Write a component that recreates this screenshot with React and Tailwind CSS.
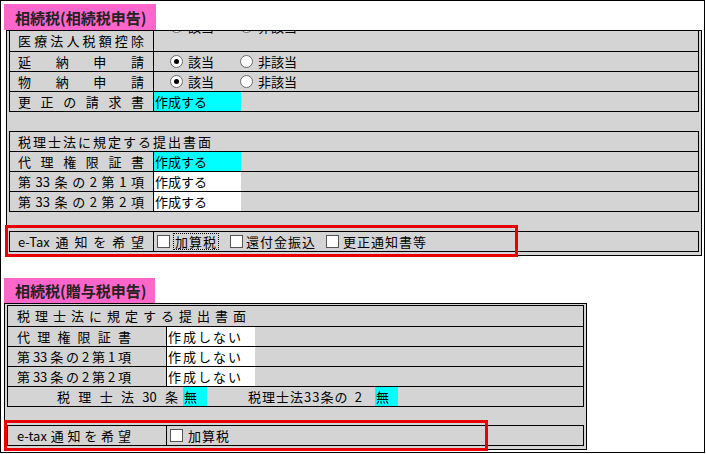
import React from "react";

function J({ t, cls }) {
  return (
    <div className={cls}>
      {t.map((c, i) => (
        <span key={i}>{c}</span>
      ))}
    </div>
  );
}

function Radio({ checked }) {
  return (
    <span className="w-[13px] h-[13px] rounded-full border border-[#6b6b6b] bg-white flex items-center justify-center shrink-0">
      {checked ? <span className="w-[5px] h-[5px] rounded-full bg-black" /> : null}
    </span>
  );
}

function RadioPair({ shift }) {
  return (
    <div className={shift ? "flex items-center h-[19px] pl-[16px] -mt-[14px]" : "flex items-center h-[19px] pl-[16px]"}>
      <Radio checked />
      <span className="ml-[5px]">該当</span>
      <span className="ml-[26px] flex">
        <Radio />
      </span>
      <span className="ml-[5px]">非該当</span>
    </div>
  );
}

function Box() {
  return <span className="w-[13px] h-[13px] border border-[#555] bg-white shrink-0" />;
}

const topLabel = "w-[144px] shrink-0 border-r border-black pl-[8px] pr-[9px] flex justify-between";
const botLabel = "w-[159px] shrink-0 border-r border-black pl-[9px] pr-[35px] flex justify-between";

export default function App() {
  return (
    <div className="w-[706px] h-[454px] bg-white">
      <div className="w-[705px] h-[453px] border border-black bg-white overflow-hidden font-['Noto_Sans_CJK_JP','Noto_Sans',sans-serif] text-[13px] leading-[19px] text-black">
        {/* ===== 相続税申告 ===== */}
        <div className="ml-[3px] mt-[3px] w-[152px] h-[26px] bg-[#ff66cc] pl-[11px] flex items-end pb-[2px] text-[15px] leading-[20px] font-bold text-[#222]">
          相続税(相続税申告)
        </div>
        <div className="ml-[5px] w-[696px] h-[226px] border border-black bg-[#d4d4d4] pl-[2px]">
          <div className="w-[690px] border-l border-r border-black">
            <div className="flex h-[21px] border-b border-black">
              <J cls={topLabel} t={["医", "療", "法", "人", "税", "額", "控", "除"]} />
              <div className="flex-1 overflow-hidden">
                <RadioPair shift />
              </div>
            </div>
            <div className="flex h-[20px] border-b border-black">
              <J cls={topLabel} t={["延", "納", "申", "請"]} />
              <div className="flex-1">
                <RadioPair />
              </div>
            </div>
            <div className="flex h-[20px] border-b border-black">
              <J cls={topLabel} t={["物", "納", "申", "請"]} />
              <div className="flex-1">
                <RadioPair />
              </div>
            </div>
            <div className="flex h-[20px] border-b border-black">
              <J cls={topLabel} t={["更", "正", "の", "請", "求", "書"]} />
              <div className="w-[87px] bg-[#00ffff] pl-[1px]">作成する</div>
            </div>
          </div>

          <div className="mt-[19px] w-[690px] border-t border-l border-r border-black">
            <div className="h-[20px] border-b border-black pl-[8px] tracking-[2px]">税理士法に規定する提出書面</div>
            <div className="flex h-[20px] border-b border-black">
              <J cls={topLabel} t={["代", "理", "権", "限", "証", "書"]} />
              <div className="w-[87px] bg-[#00ffff] pl-[1px]">作成する</div>
            </div>
            <div className="flex h-[20px] border-b border-black">
              <J cls={topLabel} t={["第", "33", "条", "の", "2", "第", "1", "項"]} />
              <div className="w-[87px] bg-white pl-[1px]">作成する</div>
            </div>
            <div className="flex h-[20px] border-b border-black">
              <J cls={topLabel} t={["第", "33", "条", "の", "2", "第", "2", "項"]} />
              <div className="w-[87px] bg-white pl-[1px]">作成する</div>
            </div>
          </div>

          <div className="relative mt-[19px] w-[690px] h-[21px] border border-black flex">
            <J cls={topLabel} t={["e-Tax", "通", "知", "を", "希", "望"]} />
            <div className="flex items-center tracking-[1px]">
              <span className="ml-[3px] flex">
                <Box />
              </span>
              <span className="ml-[3px] border border-dotted border-black px-[1px] leading-[15px]">加算税</span>
              <span className="ml-[11px] flex">
                <Box />
              </span>
              <span className="ml-[3px]">還付金振込</span>
              <span className="ml-[10px] flex">
                <Box />
              </span>
              <span className="ml-[4px]">更正通知書等</span>
            </div>
            <div className="absolute left-[-5px] top-[-7px] w-[513px] h-[32px] border-[3px] border-[#e80000] pointer-events-none" />
          </div>
        </div>

        {/* ===== 贈与税申告 ===== */}
        <div className="ml-[3px] mt-[22px] w-[151px] h-[25px] bg-[#ff66cc] pl-[11px] flex items-end pb-[2px] text-[15px] leading-[20px] font-bold text-[#222]">
          相続税(贈与税申告)
        </div>
        <div className="ml-[3px] w-[583px] h-[147px] border border-black bg-[#d4d4d4] pl-[2px] pt-[1px]">
          <div className="w-[577px] border-t border-l border-r border-black">
            <div className="h-[21px] border-b border-black pl-[9px] leading-[20px] tracking-[5px]">税理士法に規定する提出書面</div>
            <div className="flex h-[20px] border-b border-black">
              <J cls={botLabel} t={["代", "理", "権", "限", "証", "書"]} />
              <div className="w-[88px] bg-white pl-[1px] tracking-[2px]">作成しない</div>
            </div>
            <div className="flex h-[20px] border-b border-black">
              <J cls={botLabel} t={["第", "33", "条", "の", "2", "第", "1", "項"]} />
              <div className="w-[88px] bg-white pl-[1px] tracking-[2px]">作成しない</div>
            </div>
            <div className="flex h-[20px] border-b border-black">
              <J cls={botLabel} t={["第", "33", "条", "の", "2", "第", "2", "項"]} />
              <div className="w-[88px] bg-white pl-[1px] tracking-[2px]">作成しない</div>
            </div>
            <div className="flex h-[20px] border-b border-black">
              <J cls="ml-[49px] w-[121px] flex justify-between" t={["税", "理", "士", "法", "30", "条"]} />
              <div className="ml-[5px] w-[24px] bg-[#00ffff] pl-[1px]">無</div>
              <J cls="ml-[41px] w-[115px] flex justify-between tracking-[1px]" t={["税理士法33条の", "2"]} />
              <div className="ml-[12px] w-[23px] bg-[#00ffff] pl-[1px]">無</div>
            </div>
          </div>

          <div className="relative mt-[18px] w-[577px] h-[21px] border border-black flex">
            <J cls={botLabel} t={["e-tax", "通", "知", "を", "希", "望"]} />
            <div className="flex items-center tracking-[1px]">
              <span className="ml-[3px] flex">
                <Box />
              </span>
              <span className="ml-[5px]">加算税</span>
            </div>
            <div className="absolute left-[-4px] top-[-6px] w-[484px] h-[31px] border-[3px] border-[#e80000] pointer-events-none" />
          </div>
        </div>
      </div>
    </div>
  );
}
